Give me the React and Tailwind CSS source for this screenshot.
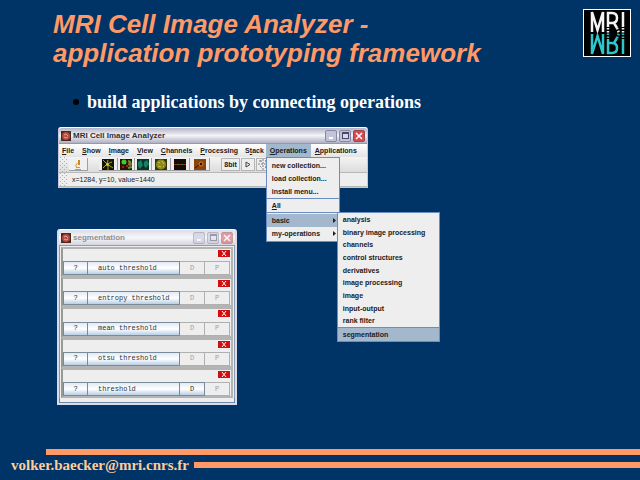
import React from "react";

const menus = ["File", "Show", "Image", "View", "Channels", "Processing"];

const categories = [
  "analysis",
  "binary image processing",
  "channels",
  "control structures",
  "derivatives",
  "image processing",
  "image",
  "input-output",
  "rank filter",
  "segmentation",
];

const operations = [
  { name: "auto threshold" },
  { name: "entropy threshold" },
  { name: "mean threshold" },
  { name: "otsu threshold" },
  { name: "threshold", display: true },
];

function Logo() {
  return (
    <svg className="size-12 shrink-0 border border-white bg-black" viewBox="0 0 46 46" role="img" aria-label="MRI">
      <g fill="none" strokeWidth="2.500">
        <g stroke="#f4f4f4">
          <path d="M8 22V2l5.500 18L19 2v20M24 17V3h4q5 0 5 5t-5 5h-4M30 13l3 5M39 2v15" />
          <path d="M24 18v5M33 18l2 5M39 18v5" strokeDasharray="1.500 1.500" />
        </g>
        <g stroke="#2fc6cc">
          <path d="M8 24v20l5.500-18L19 44V24M24 29v14h4q5 0 5-5t-5-5h-4M30 33l3-5M39 44V29" />
          <path d="M24 28v-5M33 28l2-5M39 28v-5" strokeDasharray="1.500 1.500" />
        </g>
      </g>
    </svg>
  );
}

function AppIcon() {
  return (
    <svg className="size-[10px] shrink-0" viewBox="0 0 10 10" aria-hidden="true">
      <rect width="10" height="10" fill="#4c2820" />
      <circle cx="5" cy="5" r="4" fill="#b84840" />
      <path d="M3 4l2-1 2 2M3 6l2 1 2-1" stroke="#e8a898" fill="none" />
      <path d="M0 8h2v2H0zM8 0h2v2H8z" fill="#284820" />
    </svg>
  );
}

function TitleBar({ title, inactive }) {
  return (
    <div
      className={`flex h-4 items-center gap-[2px] rounded-t-[3px] border-t border-white pr-[2px] pl-[2px] ${
        inactive
          ? "bg-linear-to-b from-[#dcdce6] via-[#f6f6fa] to-[#d4d4e0]"
          : "bg-linear-to-b from-[#b4b4c8] via-[#f4f4f8] to-[#b0b0c4]"
      }`}
    >
      <AppIcon />
      <h2 className={`flex-1 text-[8px] leading-3 font-bold ${inactive ? "text-[#909090]" : "text-[#303030]"}`}>
        {title}
      </h2>
      <div className={`flex gap-[2px] ${inactive ? "opacity-50" : ""}`}>
        <button aria-label="Minimize" className="flex h-3 w-3 items-end justify-center rounded-[2px] border border-[#8888a4] bg-[#c4c4d8] pb-[2px]">
          <span className="h-[2px] w-1 bg-white" />
        </button>
        <button aria-label="Maximize" className="flex h-3 w-3 items-center justify-center rounded-[2px] border border-[#8888a4] bg-[#c4c4d8]">
          <span className="size-[7px] border border-t-2 border-[#484868] bg-[#d8d8e8]" />
        </button>
        <button aria-label="Close" className="flex h-3 w-3 items-center justify-center rounded-[2px] border border-[#a04850] bg-[#d84850]">
          <svg className="size-2" viewBox="0 0 8 8" aria-hidden="true">
            <path d="M1 1l6 6M7 1L1 7" stroke="#fff" strokeWidth="1.500" />
          </svg>
        </button>
      </div>
    </div>
  );
}

function MenuLabel({ text }) {
  return (
    <>
      <span className="underline">{text[0]}</span>
      {text.slice(1)}
    </>
  );
}

function CategoryMenu() {
  return (
    <div className="absolute top-[-2px] left-[70px] z-20 flex h-[130px] w-[103px] flex-col border border-[#6c8cc4] bg-[#eeeeee]">
      {categories.map((name) => (
        <button
          key={name}
          className={`flex flex-1 items-center pl-[5px] text-left leading-none whitespace-nowrap ${
            name === "segmentation" ? "border-t border-[#6c8cc4] bg-[#a3b8cc]" : ""
          }`}
        >
          {name}
        </button>
      ))}
    </div>
  );
}

function OperationsMenu() {
  return (
    <div className="absolute top-full left-0 z-10 w-[74px] border border-[#6c8cc4] bg-[#eeeeee] pb-px leading-none">
      <div className="flex flex-col border-b border-[#6c8cc4] pt-px">
        <button className="h-[13px] pl-[5px] text-left">new collection...</button>
        <button className="h-[13px] pl-[5px] text-left">load collection...</button>
        <button className="h-[13px] pl-[5px] text-left">install menu...</button>
      </div>
      <button className="block h-[14px] w-full border-b border-[#6c8cc4] pl-[5px] text-left">
        <span className="underline">A</span>ll
      </button>
      <div className="relative mt-px">
        <button className="flex h-[13px] w-full items-center justify-between bg-[#a3b8cc] pr-[3px] pl-[5px]">
          basic <Arrow />
        </button>
        <button className="flex h-[13px] w-full items-center justify-between pr-[3px] pl-[5px]">
          my-operations <Arrow />
        </button>
        <CategoryMenu />
      </div>
    </div>
  );
}

function Arrow() {
  return (
    <svg className="h-[5px] w-[3px]" viewBox="0 0 3 5" aria-hidden="true">
      <path d="M0 0l3 2.500L0 5z" fill="#202020" />
    </svg>
  );
}

function Grip() {
  return (
    <svg className="h-full w-[7px] shrink-0" aria-hidden="true">
      <defs>
        <pattern id="dots" width="4" height="4" patternUnits="userSpaceOnUse">
          <path d="M0 0h1v1H0zM2 2h1v1H2z" fill="#a8b0bc" />
        </pattern>
      </defs>
      <rect width="7" height="100%" fill="url(#dots)" />
    </svg>
  );
}

function ToolButton({ label, className, children }) {
  return (
    <button
      aria-label={label}
      className={`flex h-[13px] items-center justify-center border-r border-b border-[#a0a0a0] ${className}`}
    >
      <svg className="h-[11px] w-3" viewBox="0 0 12 11" aria-hidden="true">
        {children}
      </svg>
    </button>
  );
}

function Toolbar() {
  return (
    <div className="flex h-[15px] items-center bg-linear-to-b from-[#f4f4f4] to-[#dcdcdc] pl-px">
      <Grip />
      <ToolButton label="Microscope" className="ml-[2px] w-[19px] bg-[#f0f0f0]">
        <path d="M6 1h2v5H6z" fill="#d08820" />
        <path d="M5.500 4q-3 2-1 4.500M4 8.500h4M3 10.500h6" stroke="#d89428" fill="none" />
      </ToolButton>
      <ToolButton label="Neuron" className="ml-[11px] w-[19px] bg-[#eeeeee]">
        <rect width="12" height="11" fill="#141408" />
        <path d="M1 1l4 4 1-4M5 5l5-2M5 5l6 4M5 5l-4 4M6 6v5" stroke="#a8a828" fill="none" />
        <circle cx="5.500" cy="5.500" r="1.500" fill="#d0cc38" />
      </ToolButton>
      <ToolButton label="Cells" className="w-[17px] bg-[#eeeeee]">
        <rect width="12" height="11" fill="#241408" />
        <circle cx="4" cy="3" r="2.500" fill="#48c828" />
        <circle cx="10" cy="5" r="2" fill="#b06820" />
        <path d="M8 9l4-1M8 2l3 1" stroke="#58a030" strokeWidth="2" />
        <circle cx="3" cy="8" r="1" fill="#c82818" />
        <circle cx="7" cy="7" r="1" fill="#c82818" />
      </ToolButton>
      <ToolButton label="Nuclei" className="w-[17px] bg-[#eeeeee]">
        <rect width="12" height="11" fill="#08342c" />
        <path d="M1 3l3-2 2 5-3 4-2-3zM7 3l3-2 2 4-3 4-2-2z" fill="#188060" />
      </ToolButton>
      <ToolButton label="Tissue" className="w-[19px] bg-[#eeeeee]">
        <rect width="12" height="11" fill="#38360c" />
        <circle cx="6" cy="5.500" r="5" fill="#8c8a1c" />
        <path d="M3 3l2 1M7 2l2 3M3 7l3 1M8 8l1-1" stroke="#c8c440" />
      </ToolButton>
      <ToolButton label="Line profile" className="w-[19px] bg-[#eeeeee]">
        <rect width="12" height="11" fill="#140c08" />
        <path d="M0 5.500h12" stroke="#8c3820" />
        <path d="M3 5.500h2M8 5.500h1" stroke="#388028" />
      </ToolButton>
      <ToolButton label="Spot" className="w-5 bg-[#eeeeee]">
        <rect width="12" height="11" fill="#8c440c" />
        <path d="M1 9l4-3" stroke="#301004" />
        <circle cx="7" cy="5" r="2" fill="#301004" stroke="#e08828" />
      </ToolButton>
      <button className="ml-[11px] h-[13px] w-[19px] border border-[#b4b4b4] bg-[#eeeeee] text-center leading-none">
        8bit
      </button>
      <button aria-label="Play" className="ml-px flex h-[13px] w-[14px] items-center justify-center border border-[#b4b4b4] bg-[#eeeeee]">
        <svg className="h-[7px] w-[6px]" viewBox="0 0 6 7" aria-hidden="true">
          <path d="M1 1l4 2.500L1 6z" stroke="#404040" fill="none" />
        </svg>
      </button>
      <button aria-label="Tile windows" className="ml-px flex h-[13px] w-[15px] items-center justify-center border border-[#b4b4b4] bg-[#eeeeee]">
        <svg className="size-[11px]" viewBox="0 0 11 11" aria-hidden="true">
          <path d="M1 2h3M3 1v3M7 2h3M8 1v3M2 7l2 2M8 7l-1 3M5 0v11M0 5h11" stroke="#808080" strokeDasharray="2 1" fill="none" />
        </svg>
      </button>
    </div>
  );
}

function AnalyzerWindow() {
  return (
    <section className="ml-px w-[310px] rounded-t-[3px] border border-t-0 border-[#c8c8d8] bg-[#eeeeee] text-[7px] font-bold text-[#202020]">
      <TitleBar title="MRI Cell Image Analyzer" />
      <nav className="flex h-[14px] gap-[2px] border-t border-[#9898a8] bg-linear-to-b from-white to-[#e4e4e4] leading-none">
        {menus.map((name) => (
          <button key={name} className="px-[3px]">
            <MenuLabel text={name} />
          </button>
        ))}
        <button className="pl-[2px]">
          S<span className="underline">t</span>ack
        </button>
        <div className="relative">
          <button className="h-full bg-[#a3b8cc] px-1">
            <MenuLabel text="Operations" />
          </button>
          <OperationsMenu />
        </div>
        <button className="px-[2px]">
          <MenuLabel text="Applications" />
        </button>
      </nav>
      <Toolbar />
      <div className="flex h-[15px] items-center gap-[5px] border-t border-b border-[#b8b8b8] pl-px">
        <Grip />
        <p className="leading-none font-normal">x=1284, y=10, value=1440</p>
      </div>
    </section>
  );
}

function OperationPanel({ name, display }) {
  const active = "bg-linear-to-b from-[#e0eaf4] via-white to-[#b8cfe5] border-[#7a8a99]";
  const disabled = "bg-[#eeeeee] border-[#b0b0b0] text-[#a0a0a0]";
  return (
    <li className="flex flex-1 flex-col justify-between border-2 border-[#b4b4b4] border-l-[#989898] bg-[#eeeeee]">
      <button aria-label={`Remove ${name}`} className="mt-px mr-px flex h-[7px] w-3 items-center justify-center self-end bg-[#d01010]">
        <svg className="h-[5px] w-[6px]" viewBox="0 0 6 5" aria-hidden="true">
          <path d="M1 0l4 5M5 0L1 5" stroke="#fff" />
        </svg>
      </button>
      <div className="mr-px flex h-[14px] leading-none">
        <button className={`w-[25px] border ${active}`}>?</button>
        <button className={`flex-1 border border-l-0 pl-[10px] text-left whitespace-nowrap ${active}`}>{name}</button>
        <button disabled={!display} className={`w-[25px] border border-l-0 ${display ? active : disabled}`}>
          D
        </button>
        <button disabled className={`w-[25px] border border-l-0 ${disabled}`}>
          P
        </button>
      </div>
    </li>
  );
}

function SegmentationWindow() {
  return (
    <section className="w-[180px] rounded-t-[3px] border-2 border-t-0 border-[#dcdce8] bg-[#eeeeee] text-[#303030]">
      <TitleBar title="segmentation" inactive />
      <ul className="flex h-[153px] flex-col border-x border-t border-[#8c9cb0] px-px pt-px font-['Liberation_Mono',monospace] text-[7px]">
        {operations.map((op) => (
          <OperationPanel key={op.name} {...op} />
        ))}
      </ul>
      <div className="h-[5px] border-x border-b border-[#7088a8]" />
    </section>
  );
}

export default function App() {
  return (
    <main className="flex min-h-screen flex-col bg-[#003366] font-['Liberation_Sans',Arial,sans-serif]">
      <header className="flex items-start justify-between pt-[9px] pr-[9px] pl-[53px]">
        <h1 className="pt-px text-[26px] leading-[29px] font-bold text-[#ff9966] italic">
          MRI Cell Image Analyzer -<br />
          application prototyping framework
        </h1>
        <Logo />
      </header>

      <ul className="mt-6 flex pl-[73px] font-['Liberation_Serif',serif] text-[18px] leading-5 font-bold text-white">
        <li className="flex items-center gap-2">
          <span className="size-[6px] rounded-full bg-black" />
          build applications by connecting operations
        </li>
      </ul>

      <div className="mt-[15px] flex flex-col items-start gap-[41px] pl-[57px]">
        <AnalyzerWindow />
        <SegmentationWindow />
      </div>

      <footer className="mt-auto pb-[5px]">
        <div className="ml-[46px] h-[6px] bg-[#ff9966]" />
        <div className="flex items-center gap-[5px] pl-[11px]">
          <a href="mailto:volker.baecker@mri.cnrs.fr" className="font-['Liberation_Serif',serif] text-[15px] leading-5 font-bold text-[#ffcc99]">
            volker.baecker@mri.cnrs.fr
          </a>
          <div className="h-[6px] flex-1 bg-[#ff9966]" />
        </div>
      </footer>
    </main>
  );
}
